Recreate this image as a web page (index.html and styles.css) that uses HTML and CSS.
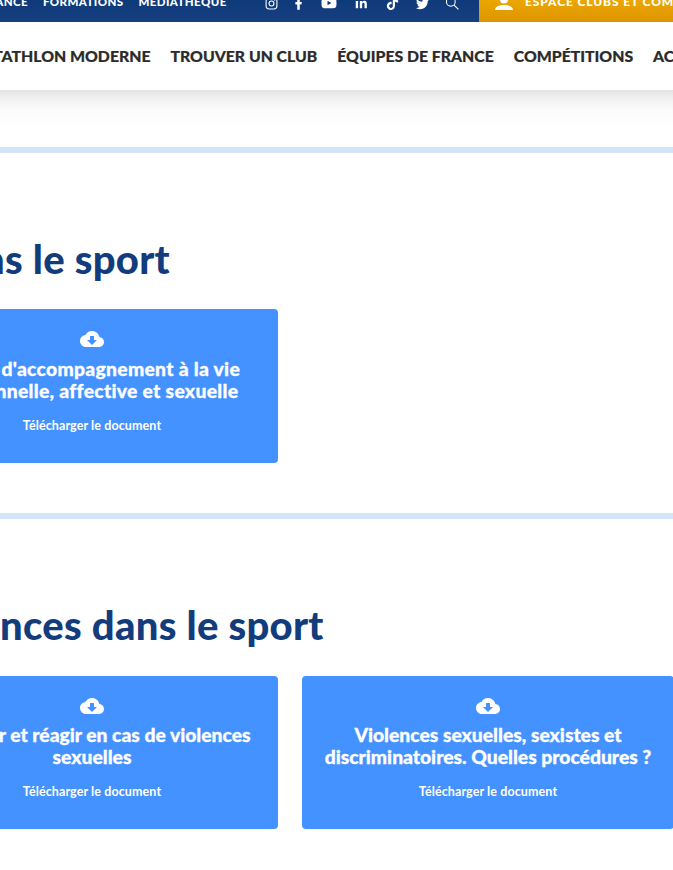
FILE: index.html
```html
<!DOCTYPE html>
<html lang="fr">
<head>
    <meta charset="UTF-8">
    <meta name="viewport" content="width=device-width, initial-scale=1.0">
    <title>Documents</title>
    <link rel="stylesheet" href="styles.css">
</head>
<body>
    <header class="site-header">
        <div class="topbar">
            <nav class="top-links">
                <a>Performance</a>
                <a>Formations</a>
                <a>Médiathèque</a>
            </nav>
            <div class="socials">
                <a class="social social-ig"><svg width="13" height="13" viewBox="0 0 24 24" fill="none" stroke="#fff" stroke-width="2"><rect x="2" y="2" width="20" height="20" rx="6"/><circle cx="12" cy="12" r="4.5"/><circle cx="18" cy="6" r="1" fill="#fff" stroke="none"/></svg></a>
                <a class="social"><svg width="15" height="15" viewBox="0 0 24 24" fill="#fff"><path d="M14 13.5h2.5l1-4H14v-2c0-1.03 0-2 2-2h1.5V2.14c-.326-.043-1.557-.14-2.857-.14C11.928 2 10 3.657 10 6.7v2.8H7v4h3V22h4v-8.5z"/></svg></a>
                <a class="social social-wide"><svg width="18" height="18" viewBox="0 0 24 24" fill="#fff"><path d="M10 15l5.19-3L10 9v6m11.56-7.83c.13.47.22 1.1.28 1.9.07.8.1 1.49.1 2.09L22 12c0 2.19-.16 3.8-.44 4.83-.25.9-.83 1.48-1.73 1.73-.47.13-1.33.22-2.65.28-1.3.07-2.49.1-3.59.1L12 19c-4.19 0-6.8-.16-7.83-.44-.9-.25-1.48-.83-1.73-1.73-.13-.47-.22-1.1-.28-1.9-.07-.8-.1-1.49-.1-2.09L2 12c0-2.19.16-3.8.44-4.83.25-.9.83-1.48 1.73-1.73.47-.13 1.33-.22 2.65-.28 1.3-.07 2.49-.1 3.59-.1L12 5c4.19 0 6.8.16 7.83.44.9.25 1.48.83 1.73 1.73z"/></svg></a>
                <a class="social social-wide"><svg width="14" height="14" viewBox="0 0 24 24" fill="#fff"><path d="M3 8.5h4V21H3z"/><circle cx="5" cy="4.5" r="2.4"/><path d="M10 8.5h3.8v1.8c.6-1 1.9-2.1 3.9-2.1 3.4 0 4.3 2.2 4.3 5.3V21h-4v-6.700c0-1.500-.3-2.800-1.900-2.800s-2.100 1.300-2.100 2.800V21h-4z"/></svg></a>
                <a class="social"><svg width="13" height="13" viewBox="0 0 24 24" fill="#fff"><path d="M12.525.02c1.31-.02 2.61-.01 3.91-.02.08 1.53.63 3.09 1.75 4.17 1.12 1.11 2.7 1.62 4.24 1.79v4.03c-1.44-.05-2.89-.35-4.2-.97-.57-.26-1.1-.59-1.62-.93-.01 2.92.01 5.84-.02 8.75-.08 1.4-.54 2.79-1.35 3.94-1.31 1.92-3.58 3.17-5.91 3.21-1.43.08-2.86-.31-4.08-1.03-2.02-1.19-3.44-3.37-3.65-5.71-.02-.5-.03-1-.01-1.49.18-1.9 1.12-3.72 2.58-4.96 1.66-1.44 3.98-2.13 6.15-1.72.02 1.48-.04 2.96-.04 4.44-.99-.32-2.15-.23-3.02.37-.63.41-1.11 1.04-1.36 1.75-.21.51-.15 1.07-.14 1.61.24 1.64 1.82 3.02 3.5 2.87 1.12-.01 2.19-.66 2.77-1.61.19-.33.4-.67.41-1.06.1-1.79.06-3.57.07-5.36.01-4.03-.01-8.05.02-12.07z"/></svg></a>
                <a class="social"><svg width="15" height="15" viewBox="0 0 24 24" fill="#fff"><path d="M22.46 6c-.77.35-1.6.58-2.46.69.88-.53 1.56-1.37 1.88-2.38-.83.5-1.75.85-2.72 1.05C18.37 4.5 17.26 4 16 4c-2.35 0-4.27 1.92-4.27 4.29 0 .34.04.67.11.98C8.28 9.09 5.11 7.38 3 4.79c-.37.63-.58 1.37-.58 2.15 0 1.49.75 2.81 1.91 3.56-.71 0-1.37-.2-1.95-.5v.03c0 2.08 1.48 3.82 3.44 4.21a4.22 4.22 0 0 1-1.93.07 4.28 4.28 0 0 0 4 2.98 8.521 8.521 0 0 1-5.33 1.84c-.34 0-.68-.02-1.02-.06C3.44 20.29 5.7 21 8.12 21 16 21 20.33 14.46 20.33 8.79c0-.19 0-.37-.01-.56.84-.6 1.56-1.36 2.14-2.23z"/></svg></a>
                <a class="social"><svg width="14" height="14" viewBox="0 0 24 24" fill="none" stroke="#fff" stroke-width="1.800"><circle cx="10" cy="10" r="7.500"/><path d="M15.500 15.500L23 23"/></svg></a>
            </div>
            <a class="espace">
                <svg width="18" height="14" viewBox="0 0 18 14" fill="#fff"><circle cx="9" cy="3.500" r="4"/><path d="M0 14c0-3.500 4-5 9-5s9 1.500 9 5z"/></svg>
                <span>Espace clubs et comités</span>
            </a>
        </div>
        <nav class="main-nav">
            <a class="nav-first">Pentathlon moderne</a>
            <a>Trouver un club</a>
            <a>Équipes de France</a>
            <a>Compétitions</a>
            <a>Actualités</a>
        </nav>
        <div class="header-shade"></div>
    </header>

    <section class="doc-section first-section">
        <h2 class="heading-one">dans le sport</h2>
        <div class="cards">
            <a class="card">
                <svg class="cloud" width="24" height="16" viewBox="0 4 24 16" fill="#fff" fill-rule="evenodd"><path d="M19.35 10.04C18.67 6.59 15.64 4 12 4 9.11 4 6.6 5.64 5.35 8.04 2.34 8.36 0 10.91 0 14c0 3.31 2.69 6 6 6h13c2.76 0 5-2.24 5-5 0-2.64-2.05-4.78-4.65-4.96zM17 13l-5 5-5-5h3V9h4v4h3z"/></svg>
                <h3>Guide d'accompagnement à la vie personnelle, affective et sexuelle</h3>
                <span class="card-link">Télécharger le document</span>
            </a>
        </div>
    </section>

    <section class="doc-section second-section">
        <h2 class="heading-two">violences dans le sport</h2>
        <div class="cards">
            <a class="card">
                <svg class="cloud" width="24" height="16" viewBox="0 4 24 16" fill="#fff" fill-rule="evenodd"><path d="M19.35 10.04C18.67 6.59 15.64 4 12 4 9.11 4 6.6 5.64 5.35 8.04 2.34 8.36 0 10.91 0 14c0 3.31 2.69 6 6 6h13c2.76 0 5-2.24 5-5 0-2.64-2.05-4.78-4.65-4.96zM17 13l-5 5-5-5h3V9h4v4h3z"/></svg>
                <h3>Prévenir et réagir en cas de violences sexuelles</h3>
                <span class="card-link">Télécharger le document</span>
            </a>
            <a class="card">
                <svg class="cloud" width="24" height="16" viewBox="0 4 24 16" fill="#fff" fill-rule="evenodd"><path d="M19.35 10.04C18.67 6.59 15.64 4 12 4 9.11 4 6.6 5.64 5.35 8.04 2.34 8.36 0 10.91 0 14c0 3.31 2.69 6 6 6h13c2.76 0 5-2.24 5-5 0-2.64-2.05-4.78-4.65-4.96zM17 13l-5 5-5-5h3V9h4v4h3z"/></svg>
                <h3>Violences sexuelles, sexistes et discriminatoires. Quelles procédures ?</h3>
                <span class="card-link">Télécharger le document</span>
            </a>
        </div>
    </section>
</body>
</html>
```
FILE: styles.css
```css
html, body {
    height: 870px;
    overflow: hidden;
}
body {
    margin: 0;
    background: white;
    font-family: Lato, Arial, sans-serif;
}

/* Top bar, the page is scrolled so the text is cut at the top */
.topbar {
    display: flex;
    height: 22px;
    background: linear-gradient(#0f3a7a, #163f80);
    color: white;
    overflow: hidden;
}
.top-links, .socials, .espace {
    display: flex;
    align-items: center;
    box-sizing: border-box;
    padding-bottom: 16px;
    white-space: nowrap;
}
.top-links {
    margin-left: -63px;
    gap: 15px;
    width: 322px;
    padding-bottom: 19px;
    flex-shrink: 0;
    font-size: 11.5px;
    font-weight: 900;
    letter-spacing: 0.4px;
    text-transform: uppercase;
}
.socials {
    width: 220px;
    flex-shrink: 0;
}
.social {
    display: flex;
    justify-content: center;
    width: 30px;
    flex-shrink: 0;
}
.social-ig {
    width: 24px;
}
.social-wide {
    width: 32px;
}
.espace {
    flex: 1;
    gap: 12px;
    padding-left: 16px;
    background: linear-gradient(#eba600, #dd9500);
    font-size: 12px;
    font-weight: 900;
    letter-spacing: 0.9px;
    text-transform: uppercase;
}
.espace span {
    margin-bottom: 3px;
}

/* Main menu */
.main-nav {
    display: flex;
    align-items: center;
    gap: 20px;
    box-sizing: border-box;
    height: 68px;
    padding-bottom: 2px;
    background: white;
    color: #2b2b2b;
    font-size: 15.8px;
    font-weight: 900;
    -webkit-text-stroke: 0.2px #2b2b2b;
    text-transform: uppercase;
    white-space: nowrap;
}
.nav-first {
    margin-left: -38px;
}
.header-shade {
    height: 40px;
    background: linear-gradient(#e3e3e3, #f3f3f3 25%, #fbfbfb 50%, #fff);
}

/* Document sections */
.doc-section {
    border-top: 6px solid #d3e5f9;
    height: 360px;
}
.first-section {
    margin-top: 17px;
}
h2 {
    margin: 0;
    padding-top: 83px;
    height: 73px;
    font-size: 40px;
    line-height: 46px;
    font-weight: 900;
    letter-spacing: 0.3px;
    color: #133c7c;
    white-space: nowrap;
}
.heading-one {
    margin-left: -62px;
}
.heading-two {
    margin-left: -88px;
    height: 74px;
}
.cards {
    display: flex;
    gap: 24px;
    margin-left: -94px;
}
.card {
    display: flex;
    flex-direction: column;
    align-items: center;
    box-sizing: border-box;
    width: 372px;
    height: 154px;
    padding: 22px 20px 0;
    flex-shrink: 0;
    border-radius: 4px;
    background: #4492ff;
    color: white;
    text-align: center;
}
.second-section .card {
    height: 153px;
}
.card h3 {
    margin: 11px 0 0;
    font-size: 19.3px;
    line-height: 22px;
    font-weight: 900;
    -webkit-text-stroke: 0.3px white;
}
.first-section .card h3 {
    letter-spacing: 0.3px;
}
.second-section .card h3 {
    margin-top: 10px;
}
.card-link {
    margin-top: 16px;
    font-size: 12.5px;
    font-weight: 700;
    letter-spacing: 0.1px;
}
```
